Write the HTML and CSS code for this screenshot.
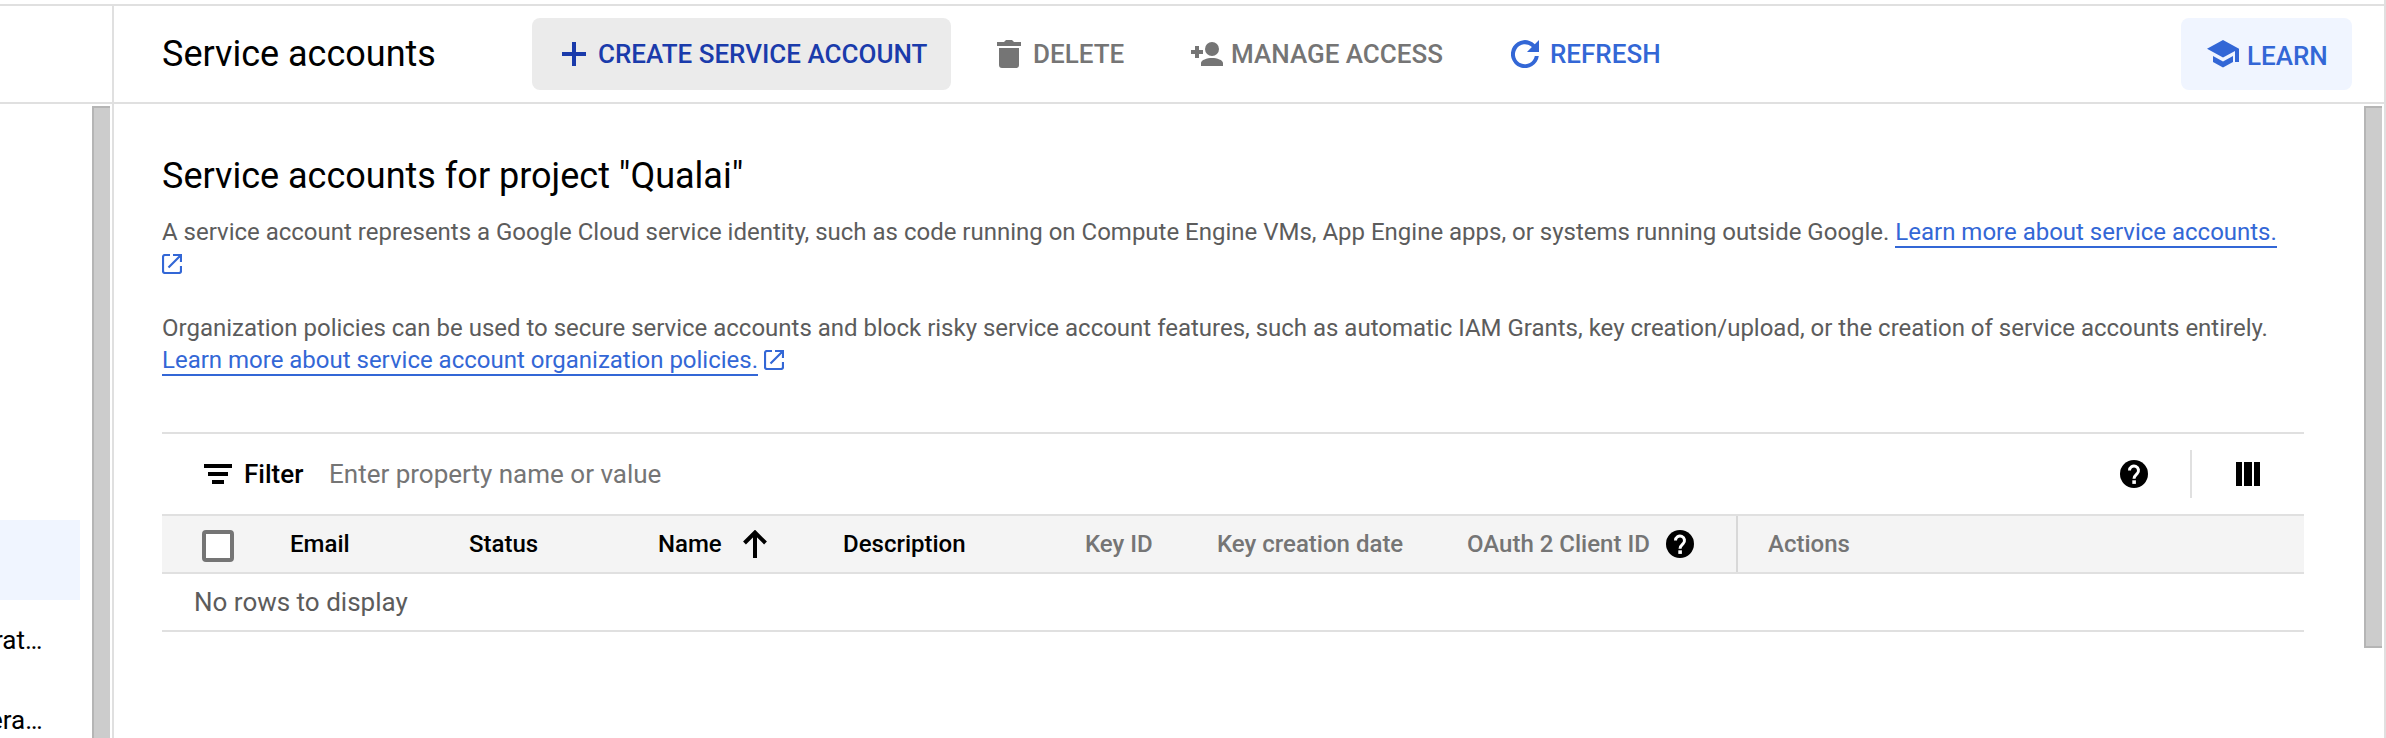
FILE: index.html
```html
<!DOCTYPE html>
<html lang="en">
<head>
<meta charset="utf-8">
<title>Service accounts</title>
<link rel="stylesheet" href="styles.css">
</head>
<body>
<div class="app">
  <header class="topbar">
    <div class="topbar-nav"></div>
    <div class="topbar-main">
      <h1 class="title">Service accounts</h1>
      <button class="btn btn-create"><svg class="icon" width="24" height="24" viewBox="0 0 24 24"><path d="M10 0h4v10h10v4H14v10h-4V14H0v-4h10z"/></svg><span class="t-create">CREATE SERVICE ACCOUNT</span></button>
      <button class="btn btn-delete"><svg class="icon" width="24" height="28" viewBox="0 0 24 28"><path d="M0 2h7l2-2h6l2 2h7v4H0zM2 8h20v17a3 3 0 0 1-3 3H5a3 3 0 0 1-3-3z"/></svg><span class="t-delete">DELETE</span></button>
      <button class="btn btn-manage"><svg class="icon" width="32" height="24" viewBox="0 0 32 24"><circle cx="21" cy="7" r="7"/><path d="M10 24v-3c0-3 6-5 11-5s11 2 11 5v3zM4 4h4v4h4v4H8v4H4v-4H0V8h4z"/></svg><span class="t-manage">MANAGE ACCESS</span></button>
      <button class="btn btn-refresh"><svg class="icon" width="28" height="28" viewBox="0 0 28 28"><path d="M28 0v12H16l4.900-4.900A10 10 0 1 0 23.800 16H27.800A14 14 0 1 1 23.800 4.200z"/></svg><span class="t-refresh">REFRESH</span></button>
      <button class="btn btn-learn"><svg class="icon" width="32" height="28" viewBox="0 0 32 28"><path d="M16 0l16 8.700V22h-4V11L16 17.400 0 8.700zM6 16l10 5.400L26 16v6l-10 5.500L6 22z"/></svg><span class="t-learn">LEARN</span></button>
    </div>
  </header>
  <div class="body">
    <nav class="sidebar">
      <div class="nav-items">
        <div class="nav-item nav-item-active"></div>
        <div class="nav-item"><span class="nav-text nav-text-a">rat…</span></div>
        <div class="nav-item"><span class="nav-text nav-text-b">era…</span></div>
      </div>
      <div class="nav-scroll"></div>
    </nav>
    <main class="content">
      <h2 class="heading">Service accounts for project "Qualai"</h2>
      <p class="para para-first">A service account represents a Google Cloud service identity, such as code running on Compute Engine VMs, App Engine apps, or systems running outside Google. <a class="link">Learn more about service accounts.</a><br><svg class="ext ext-first" width="20" height="20" viewBox="0 0 20 20"><path d="M8 1H3a2 2 0 0 0-2 2v14a2 2 0 0 0 2 2h14a2 2 0 0 0 2-2v-5M11 1h8v7M18.500 1.500L6.500 13.500"/></svg></p>
      <p class="para para-second">Organization policies can be used to secure service accounts and block risky service account features, such as automatic IAM Grants, key creation/upload, or the creation of service accounts entirely.<br><a class="link">Learn more about service account organization policies.</a><svg class="ext ext-second" width="20" height="20" viewBox="0 0 20 20"><path d="M8 1H3a2 2 0 0 0-2 2v14a2 2 0 0 0 2 2h14a2 2 0 0 0 2-2v-5M11 1h8v7M18.500 1.500L6.500 13.500"/></svg></p>
      <section class="table">
        <div class="filter">
          <svg class="filter-icon" width="28" height="20" viewBox="0 0 28 20"><path d="M0 0h28v4H0zM4 8h20v4H4zM8 16h12v4H8z"/></svg>
          <span class="filter-label">Filter</span>
          <span class="filter-hint">Enter property name or value</span>
          <svg class="help" width="28" height="28" viewBox="0 0 28 28"><circle cx="14" cy="14" r="14"/><path class="help-mark" d="M9.500 10.500a4.500 4.500 0 1 1 7.600 3.200C15.300 15.300 14 16 14 18.800"/><path class="help-dot" d="M12.300 20.300h3.600v3.600h-3.600z"/></svg>
          <span class="filter-divider"></span>
          <svg class="columns" width="24" height="24" viewBox="0 0 24 24"><path d="M0 0h6v24H0zM8 0h8v24H8zM18 0h6v24h-6z"/></svg>
        </div>
        <div class="row-head">
          <span class="cell cell-check"><span class="checkbox"></span></span>
          <span class="cell">Email</span>
          <span class="cell">Status</span>
          <span class="cell cell-name">Name<svg class="arrow" width="24" height="28" viewBox="0 0 24 28"><path d="M12 28V3M1.500 13L12 2.500 22.500 13"/></svg></span>
          <span class="cell">Description</span>
          <span class="cell muted">Key ID</span>
          <span class="cell muted">Key creation date</span>
          <span class="cell cell-oauth muted">OAuth 2 Client ID<svg class="help" width="28" height="28" viewBox="0 0 28 28"><circle cx="14" cy="14" r="14"/><path class="help-mark" d="M9.500 10.500a4.500 4.500 0 1 1 7.600 3.200C15.300 15.300 14 16 14 18.800"/><path class="help-dot" d="M12.300 20.300h3.600v3.600h-3.600z"/></svg></span>
          <span class="cell cell-actions muted">Actions</span>
        </div>
        <div class="row-empty">No rows to display</div>
      </section>
    </main>
    <div class="main-scroll"></div>
  </div>
</div>
</body>
</html>
```
FILE: styles.css
```css
* { box-sizing: border-box; }
body { margin: 0; background: #fff; font-family: Roboto, "Liberation Sans", sans-serif; color: #000; }
.app { width: 2386px; height: 738px; padding-top: 4px; display: flex; flex-direction: column; overflow: hidden; border-right: 2px solid #e0e0e0; }
.topbar { height: 100px; flex: none; display: flex; border-top: 2px solid #e0e0e0; border-bottom: 2px solid #e0e0e0; }
.topbar-nav { width: 114px; border-right: 2px solid #e0e0e0; }
.topbar-main { flex: 1; display: flex; align-items: center; padding: 0 32px 0 48px; }
.title { margin: 0; width: 370px; font-size: 36px; line-height: 48px; font-weight: 400; white-space: nowrap; }
.btn { height: 72px; border: 0; border-radius: 8px; padding: 0; background: none; display: flex; align-items: center; font: 500 26px/36px Roboto, sans-serif; white-space: nowrap; color: #757575; flex: none; }
.icon { fill: currentColor; flex: none; }
.btn-create { width: 419px; padding-left: 30px; gap: 12px; background: #ebebeb; color: #1a3bab; }
.btn-delete { width: 194px; margin-left: 46px; gap: 12px; }
.btn-manage { width: 320px; gap: 8px; }
.btn-refresh { gap: 11px; color: #3367d6; }
.btn-learn { width: 171px; margin-left: auto; padding-left: 26px; gap: 8px; background: #f0f5ff; color: #3367d6; }
.t-learn { padding-top: 3px; }
.body { flex: 1; display: flex; min-height: 0; }
.sidebar { width: 114px; display: flex; justify-content: space-between; border-right: 2px solid #e0e0e0; padding-right: 2px; overflow: hidden; }
.nav-items { width: 80px; padding-top: 416px; overflow: hidden; }
.nav-item { height: 80px; display: flex; align-items: center; font-size: 26px; line-height: 36px; }
.nav-item-active { background: #f0f5ff; }
.nav-text-a { margin-left: -6px; }
.nav-text-b { margin-left: -11px; }
.nav-scroll { width: 18px; margin-top: 2px; background: #ccc; border: solid #b5b5b5; border-width: 2px 0 0 2px; }
.content { width: 2190px; padding: 48px 0 0 48px; }
.heading { margin: 0; font-size: 36px; line-height: 48px; font-weight: 400; }
.para { margin: 0; font-size: 24px; line-height: 32px; letter-spacing: -0.007px; color: #5c5c5c; white-space: nowrap; }
.para-first { margin-top: 16px; }
.para-second { margin-top: 32px; }
.link { display: inline-block; height: 32px; color: #3367d6; border-bottom: 2px solid #3367d6; vertical-align: top; }
.ext { fill: none; stroke: #3367d6; stroke-width: 2.200; vertical-align: top; margin-top: 6px; }
.ext-second { margin-left: 6px; }
.table { width: 2142px; margin-top: 56px; border-top: 2px solid #e0e0e0; }
.filter { height: 80px; display: flex; align-items: center; padding: 0 44px 0 42px; font-size: 26px; line-height: 36px; }
.filter-label { margin-left: 12px; width: 85px; font-weight: 500; }
.filter-hint { color: #757575; margin-right: auto; }
.filter-divider { width: 2px; height: 48px; margin: 0 44px 0 42px; background: #e0e0e0; }
.help-mark { fill: none; stroke: #fff; stroke-width: 3; }
.help-dot { fill: #fff; }
.row-head { height: 60px; display: grid; grid-template-columns: 128px 179px 189px 185px 242px 132px 250px 269px 1fr; align-items: stretch; background: #f4f4f4; border-top: 2px solid #e0e0e0; border-bottom: 2px solid #e0e0e0; font-size: 24px; line-height: 32px; font-weight: 500; white-space: nowrap; }
.cell { display: flex; align-items: center; }
.muted { color: #757575; }
.cell-check { padding: 4px 0 0 40px; }
.checkbox { width: 32px; height: 32px; border: 4px solid #757575; border-radius: 4px; background: #fff; }
.arrow { margin-left: 21px; fill: none; stroke: #000; stroke-width: 4; }
.cell-oauth { gap: 16px; }
.cell-actions { border-left: 2px solid #d8d8d8; padding-left: 30px; }
.row-empty { height: 58px; padding: 10px 0 0 32px; border-bottom: 2px solid #e0e0e0; font-size: 26px; line-height: 36px; color: #5c5c5c; }
.main-scroll { width: 18px; height: 542px; margin: 2px 2px 0 auto; background: #ccc; border: solid #b5b5b5; border-width: 2px 0 2px 2px; }
```
